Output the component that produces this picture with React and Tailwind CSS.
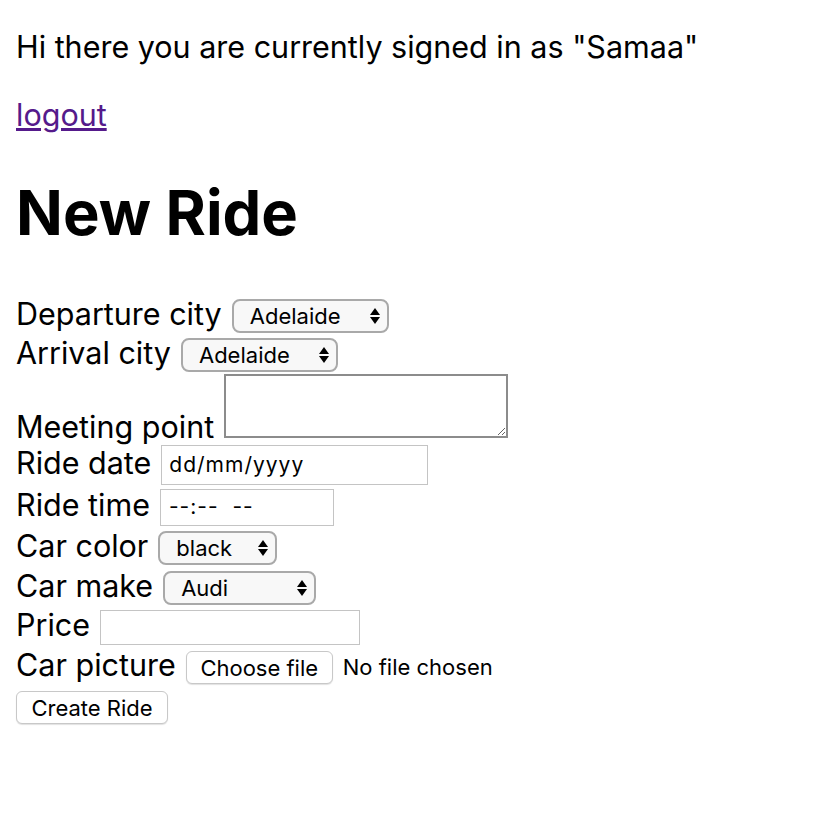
import React from 'react';

const font = { fontFamily: 'Inter, "Noto Sans", sans-serif' };

// Mac-style select with stacked arrows
function FakeSelect({ value, width }) {
  return (
    <div
      className={`relative flex items-center h-[34px] rounded-[8px] border-2 border-[#a9a9a9] bg-[#f8f8f8] pl-[16px] text-[22px] text-black ${width}`}
    >
      <span>{value}</span>
      <svg
        className="absolute right-[7px] top-1/2 -translate-y-1/2"
        width="10"
        height="18"
        viewBox="0 0 10 18"
      >
        <path d="M5 1 L10 8 L0 8 Z" fill="#000" />
        <path d="M5 17 L10 10 L0 10 Z" fill="#000" />
      </svg>
    </div>
  );
}

function Row({ label, height, children, align = 'items-center' }) {
  const shift = align === 'items-center' ? 'mb-[5px]' : '-mb-[3px]';
  return (
    <div className={`flex ${align} gap-[10px] ${height}`}>
      <span className={`text-[30.5px] leading-[40px] text-black ${shift}`}>{label}</span>
      {children}
    </div>
  );
}

export default function App() {
  return (
    <div className="min-h-screen bg-white px-[16px] pt-[27px] text-black" style={font}>
      {/* Greeting */}
      <p className="text-[30.5px] leading-[40px] h-[40px]">
        Hi there you are currently signed in as "Samaa"
      </p>
      <a href="#" className="block mt-[28px] text-[30.5px] leading-[40px] h-[40px] text-[#551a8b] underline">
        logout
      </a>

      <h1 className="mt-[42px] text-[61.5px] leading-[72px] font-bold">New Ride</h1>

      {/* Form */}
      <form className="mt-[47px] flex flex-col" onSubmit={(e) => e.preventDefault()}>
        <Row label="Departure city" height="h-[40px]">
          <FakeSelect value="Adelaide" width="w-[157px]" />
        </Row>
        <Row label="Arrival city" height="h-[38px]">
          <FakeSelect value="Adelaide" width="w-[157px]" />
        </Row>
        <Row label="Meeting point" height="h-[70px]" align="items-end">
          <textarea className="w-[284px] h-[64px] mb-[6px] border-2 border-[#8c8c8c] bg-white outline-none" />
        </Row>
        <Row label="Ride date" height="h-[42px]">
          <div className="flex items-center w-[267px] h-[40px] border border-[#c4c4c4] pl-[7px] text-[21px] tracking-[1px]">
            dd/mm/yyyy
          </div>
        </Row>
        <Row label="Ride time" height="h-[42px]">
          <div className="flex items-center w-[174px] h-[37px] border border-[#c4c4c4] pl-[8px] text-[21px] tracking-[1px]">
            --:--&nbsp;&nbsp;--
          </div>
        </Row>
        <Row label="Car color" height="h-[40px]">
          <FakeSelect value="black" width="w-[119px]" />
        </Row>
        <Row label="Car make" height="h-[40px]">
          <FakeSelect value="Audi" width="w-[153px]" />
        </Row>
        <Row label="Price" height="h-[38px]">
          <input
            type="text"
            className="w-[260px] h-[35px] border border-[#c4c4c4] outline-none"
          />
        </Row>
        <Row label="Car picture" height="h-[42px]">
          <div className="flex items-center gap-[10px]">
            <button
              type="button"
              className="h-[33px] w-[147px] rounded-[6px] border border-[#c8c8c8] bg-white text-[22px] shadow-[0_1px_1px_rgba(0,0,0,0.12)]"
            >
              Choose file
            </button>
            <span className="text-[22px]">No file chosen</span>
          </div>
        </Row>
        <div className="flex items-center h-[38px]">
          <button
            type="submit"
            className="h-[33px] w-[152px] rounded-[6px] border border-[#c8c8c8] bg-white text-[22px] shadow-[0_1px_1px_rgba(0,0,0,0.12)]"
          >
            Create Ride
          </button>
        </div>
      </form>
    </div>
  );
}
